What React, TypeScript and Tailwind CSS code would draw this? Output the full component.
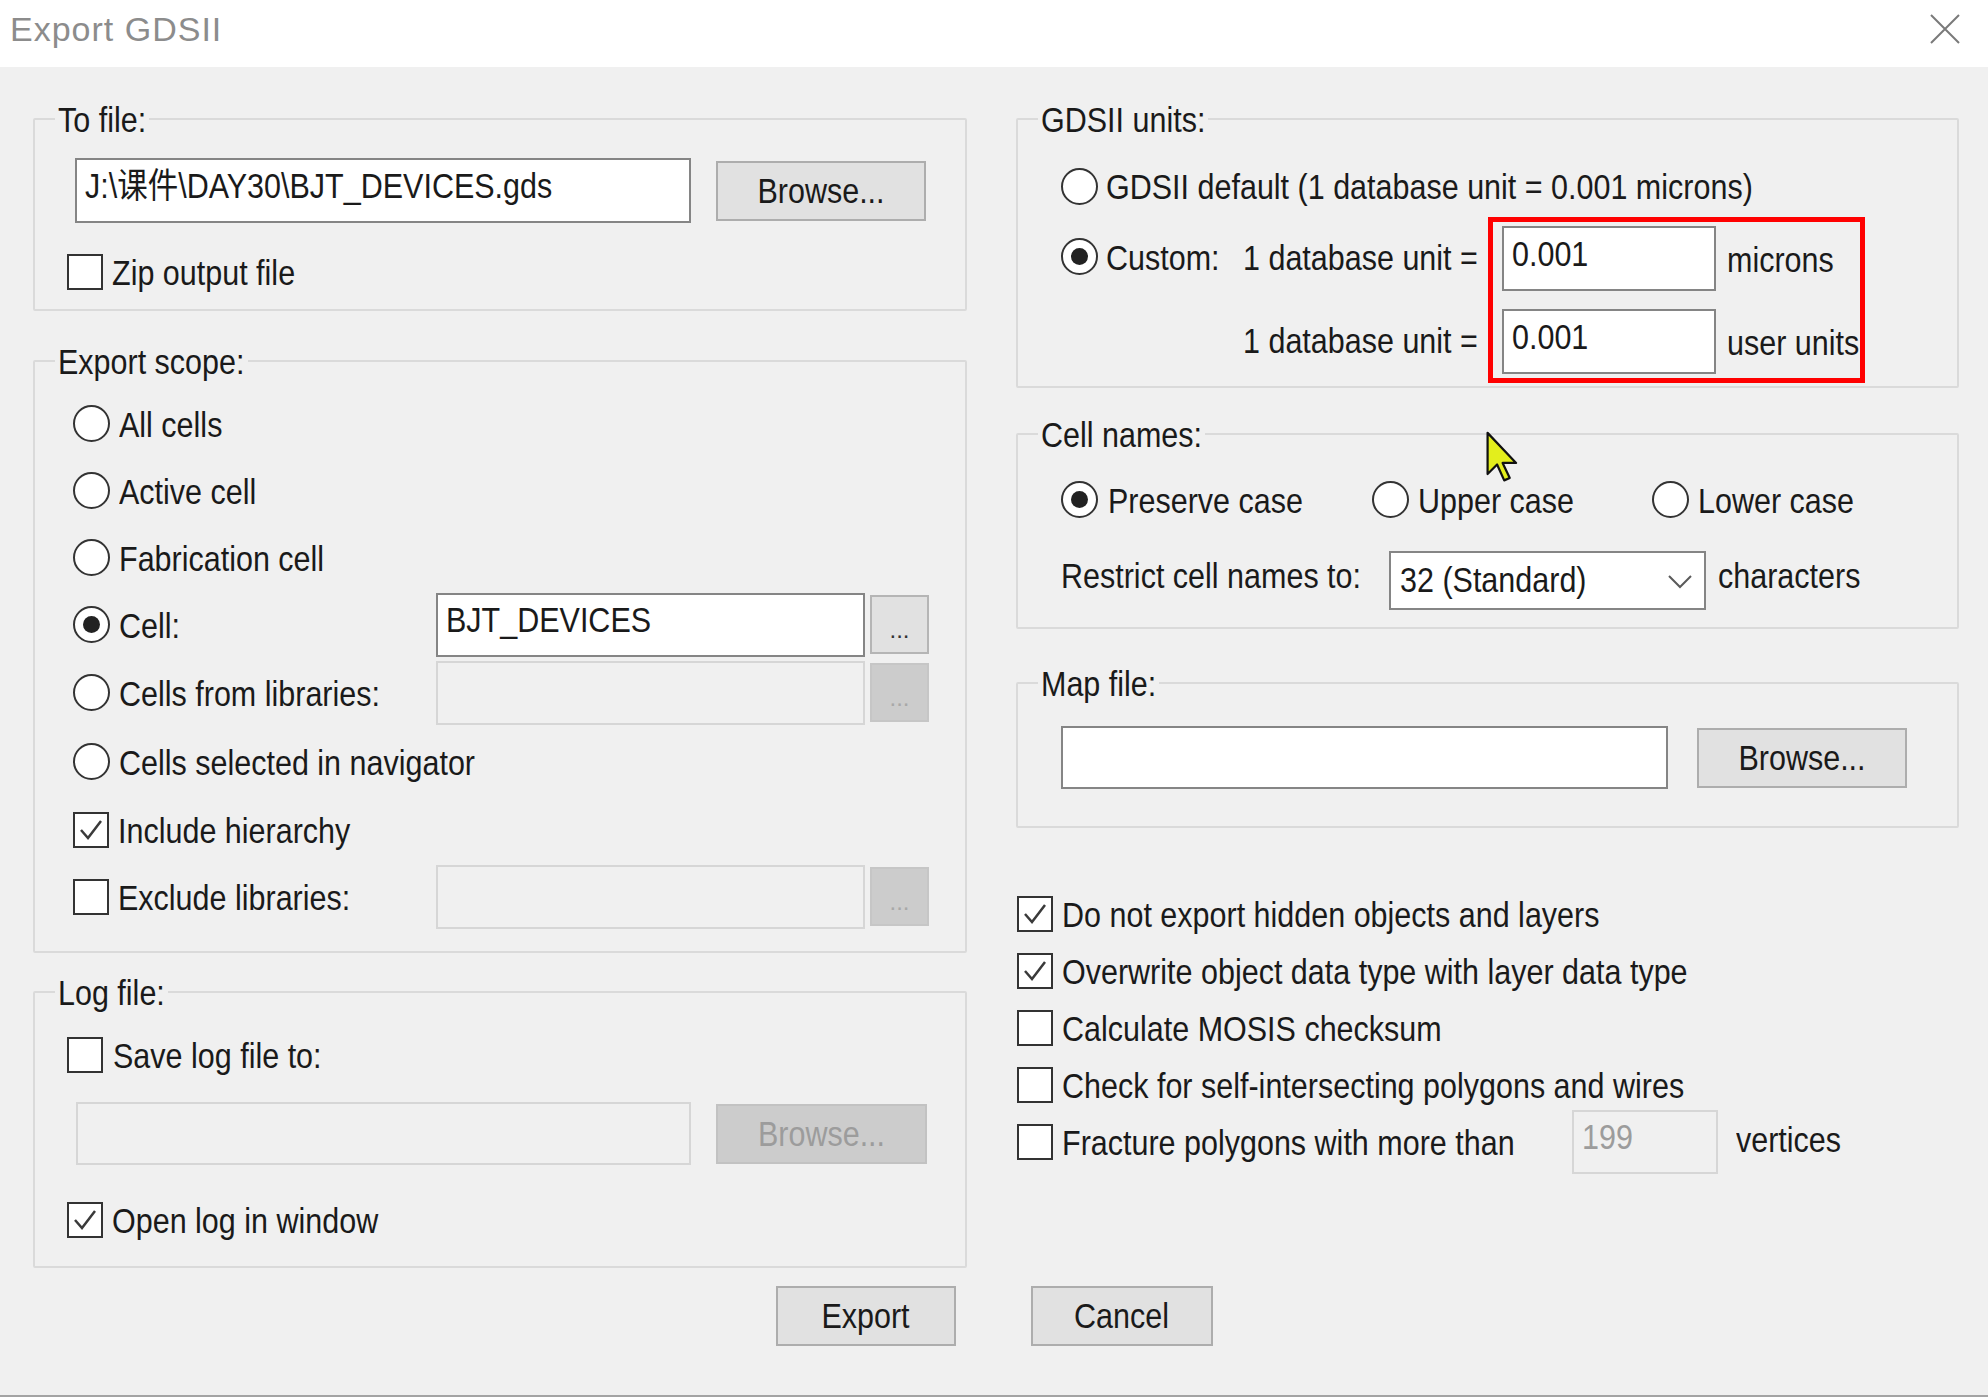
import type { ReactNode } from 'react'

// text in the original is taller than Arial at the same width, so stretch a bit
function T({ children, className = '' }: { children: ReactNode; className?: string }) {
  return <span className={`inline-block whitespace-nowrap scale-y-[1.15] ${className}`}>{children}</span>
}

function Group({
  label,
  className = '',
  inner = '',
  children,
}: {
  label: string
  className?: string
  inner?: string
  children: ReactNode
}) {
  return (
    <fieldset className={`border-2 border-[#dadada] rounded-[2px] ${className}`}>
      <legend className="ml-[20px] px-[3px] h-[36px] leading-[36px]">
        <T>{label}</T>
      </legend>
      <div className={inner}>{children}</div>
    </fieldset>
  )
}

function Radio({ checked = false }: { checked?: boolean }) {
  return (
    <span className="w-[37px] h-[37px] shrink-0 rounded-full border-2 border-[#333] bg-white flex items-center justify-center">
      {checked && <span className="w-[17px] h-[17px] rounded-full bg-[#222]" />}
    </span>
  )
}

function Check({ checked = false }: { checked?: boolean }) {
  return (
    <span className="w-[36px] h-[36px] shrink-0 border-2 border-[#333] bg-white flex items-center justify-center">
      {checked && (
        <svg width="30" height="30" viewBox="0 0 30 30" fill="none">
          <path d="M5 15 L12 23 L25 6" stroke="#3a3a3a" strokeWidth="2.5" />
        </svg>
      )}
    </span>
  )
}

function Field({ value = '', className = '', disabled = false }: { value?: string; className?: string; disabled?: boolean }) {
  return (
    <div
      className={`flex items-center pl-[8px] pb-[12px] border-2 ${
        disabled ? 'bg-[#f0f0f0] border-[#d6d6d6] text-[#9c9c9c]' : 'bg-white border-[#858585]'
      } ${className}`}
    >
      <T>{value}</T>
    </div>
  )
}

function Btn({ children, className = '', disabled = false }: { children: ReactNode; className?: string; disabled?: boolean }) {
  return (
    <div
      className={`flex items-center justify-center pb-[2px] border-2 ${
        disabled ? 'bg-[#cccccc] border-[#c2c2c2] text-[#9c9c9c]' : 'bg-[#e1e1e1] border-[#adadad]'
      } ${className}`}
    >
      <T>{children}</T>
    </div>
  )
}

function Dots({ disabled = false }: { disabled?: boolean }) {
  return (
    <div
      className={`ml-[5px] w-[59px] h-[59px] flex items-end justify-center pb-[12px] text-[24px] leading-[20px] border-2 ${
        disabled ? 'bg-[#cccccc] border-[#c6c6c6] text-[#a8a8a8]' : 'bg-[#e1e1e1] border-[#b5b5b5] text-[#333]'
      }`}
    >
      ...
    </div>
  )
}

export default function App() {
  return (
    <div className="w-full h-[1397px] overflow-hidden flex flex-col bg-[#f0f0f0] text-[30.5px] leading-[36px] text-[#1a1a1a] font-['Liberation_Sans','Noto_Sans_CJK_SC',sans-serif]">
      {/* title bar */}
      <div className="h-[67px] shrink-0 bg-white flex items-center justify-between pl-[10px] pr-[28px] pb-[10px]">
        <span className="text-[34px] tracking-[1px] text-[#8c8c8c]">Export GDSII</span>
        <svg width="30" height="30" viewBox="0 0 30 30">
          <path d="M1 1 L29 29 M29 1 L1 29" stroke="#7a7a7a" strokeWidth="2" />
        </svg>
      </div>

      <div className="relative flex-1 flex flex-col border-b-2 border-[#a3a3a3]">
        <div className="flex gap-[49px] pl-[33px] pt-[34px]">
          {/* left column */}
          <div className="w-[934px] flex flex-col">
            <Group label="To file:" inner="pl-[32px] pb-[19px]">
              <div className="mt-[21px] ml-[8px] flex items-center gap-[25px]">
                <Field className="w-[616px] h-[65px]" value={'J:\\课件\\DAY30\\BJT_DEVICES.gds'} />
                <Btn className="w-[210px] h-[60px]">Browse...</Btn>
              </div>
              <div className="mt-[31px] h-[36px] flex items-center gap-[9px]">
                <Check />
                <T>Zip output file</T>
              </div>
            </Group>

            <Group label="Export scope:" className="mt-[32px]" inner="pl-[38px] pt-[11px] pb-[21px]">
              <div className="h-[67px] flex items-center gap-[9px]">
                <Radio />
                <T>All cells</T>
              </div>
              <div className="h-[67px] flex items-center gap-[9px]">
                <Radio />
                <T>Active cell</T>
              </div>
              <div className="h-[67px] flex items-center gap-[9px]">
                <Radio />
                <T>Fabrication cell</T>
              </div>
              <div className="h-[67px] flex items-center">
                <div className="w-[363px] flex items-center gap-[9px]">
                  <Radio checked />
                  <T>Cell:</T>
                </div>
                <Field className="w-[429px] h-[64px]" value="BJT_DEVICES" />
                <Dots />
              </div>
              <div className="h-[69px] flex items-center">
                <div className="w-[363px] flex items-center gap-[9px]">
                  <Radio />
                  <T>Cells from libraries:</T>
                </div>
                <Field className="w-[429px] h-[64px]" disabled />
                <Dots disabled />
              </div>
              <div className="h-[69px] flex items-center gap-[9px]">
                <Radio />
                <T>Cells selected in navigator</T>
              </div>
              <div className="h-[67px] flex items-center gap-[9px]">
                <Check checked />
                <T>Include hierarchy</T>
              </div>
              <div className="h-[67px] flex items-center">
                <div className="w-[363px] flex items-center gap-[9px]">
                  <Check />
                  <T>Exclude libraries:</T>
                </div>
                <Field className="w-[429px] h-[64px]" disabled />
                <Dots disabled />
              </div>
            </Group>

            <Group label="Log file:" className="mt-[21px]" inner="pl-[32px] pb-[28px]">
              <div className="mt-[27px] h-[36px] flex items-center gap-[10px]">
                <Check />
                <T>Save log file to:</T>
              </div>
              <div className="mt-[29px] ml-[9px] flex items-center gap-[25px]">
                <Field className="w-[615px] h-[63px]" disabled />
                <Btn className="w-[211px] h-[60px]" disabled>
                  Browse...
                </Btn>
              </div>
              <div className="mt-[37px] h-[36px] flex items-center gap-[9px]">
                <Check checked />
                <T>Open log in window</T>
              </div>
            </Group>
          </div>

          {/* right column */}
          <div className="w-[943px] flex flex-col">
            <Group label="GDSII units:" inner="pl-[43px] pb-[12px]">
              <div className="mt-[31px] h-[36px] flex items-center gap-[8px]">
                <Radio />
                <T>GDSII default (1 database unit = 0.001 microns)</T>
              </div>
              <div className="mt-[22px] grid grid-cols-[182px_259px_214px_auto] gap-y-[18px] items-center">
                <div className="flex items-center gap-[8px] mb-[4px]">
                  <Radio checked />
                  <T>Custom:</T>
                </div>
                <T className="mb-[4px]">1 database unit =</T>
                <Field className="h-[65px]" value="0.001" />
                <T className="ml-[11px]">microns</T>
                <div />
                <T className="mb-[4px]">1 database unit =</T>
                <Field className="h-[65px]" value="0.001" />
                <T className="ml-[11px]">user units</T>
              </div>
            </Group>

            <Group label="Cell names:" className="mt-[28px]" inner="pl-[43px] pb-[17px]">
              <div className="mt-[29px] h-[37px] flex items-center">
                <div className="w-[311px] flex items-center gap-[10px]">
                  <Radio checked />
                  <T>Preserve case</T>
                </div>
                <div className="w-[280px] flex items-center gap-[9px]">
                  <Radio />
                  <T>Upper case</T>
                </div>
                <div className="flex items-center gap-[9px]">
                  <Radio />
                  <T>Lower case</T>
                </div>
              </div>
              <div className="mt-[33px] flex items-center">
                <T className="w-[328px] mb-[12px]">Restrict cell names to:</T>
                <div className="w-[317px] h-[59px] flex items-center justify-between pl-[9px] pr-[12px] pb-[4px] bg-white border-2 border-[#858585]">
                  <T>32 (Standard)</T>
                  <svg width="24" height="14" viewBox="0 0 24 14" fill="none" className="mt-[6px]">
                    <path d="M1 1 L12 12 L23 1" stroke="#5a5a5a" strokeWidth="2" />
                  </svg>
                </div>
                <T className="ml-[12px] mb-[12px]">characters</T>
              </div>
            </Group>

            <Group label="Map file:" className="mt-[36px]" inner="pl-[43px] pb-[37px]">
              <div className="mt-[25px] flex items-center gap-[29px]">
                <Field className="w-[607px] h-[63px]" />
                <Btn className="w-[210px] h-[60px]">Browse...</Btn>
              </div>
            </Group>

            <div className="mt-[57px] pl-[1px] flex flex-col">
              <div className="h-[57px] flex items-center gap-[9px]">
                <Check checked />
                <T>Do not export hidden objects and layers</T>
              </div>
              <div className="h-[57px] flex items-center gap-[9px]">
                <Check checked />
                <T>Overwrite object data type with layer data type</T>
              </div>
              <div className="h-[57px] flex items-center gap-[9px]">
                <Check />
                <T>Calculate MOSIS checksum</T>
              </div>
              <div className="h-[57px] flex items-center gap-[9px]">
                <Check />
                <T>Check for self-intersecting polygons and wires</T>
              </div>
              <div className="h-[57px] flex items-center">
                <div className="w-[555px] flex items-center gap-[9px]">
                  <Check />
                  <T>Fracture polygons with more than</T>
                </div>
                <Field className="w-[146px] h-[64px]" value="199" disabled />
                <T className="ml-[18px] mb-[6px]">vertices</T>
              </div>
            </div>
          </div>
        </div>

        <div className="flex justify-center gap-[75px] mt-[18px]">
          <Btn className="w-[180px] h-[60px]">Export</Btn>
          <Btn className="w-[182px] h-[60px]">Cancel</Btn>
        </div>

        {/* red annotation box around the custom unit fields */}
        <div className="absolute left-[1488px] top-[150px] w-[377px] h-[166px] border-[5px] border-[#ff0000]" />

        {/* mouse pointer */}
        <svg className="absolute left-[1486px] top-[364px]" width="38" height="56" viewBox="0 0 24 35">
          <path d="M1 1 L1 27 L7 21 L11.5 31 L15 29.5 L10.5 20 L19 20 Z" fill="#e3ee1c" stroke="#111" strokeWidth="1.4" strokeLinejoin="round" />
        </svg>
      </div>
    </div>
  )
}
